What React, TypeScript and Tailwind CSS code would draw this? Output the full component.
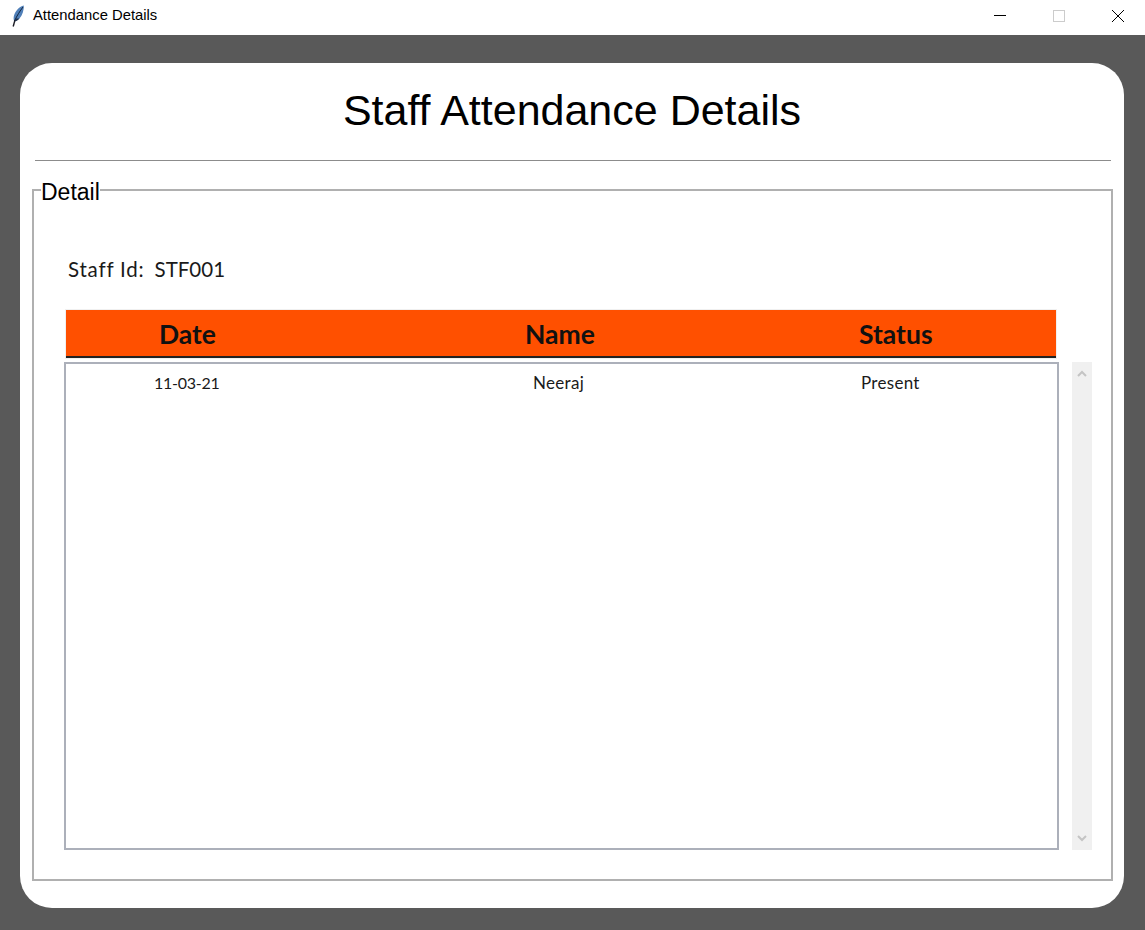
import type { ReactElement } from "react";

const ROWS = [{ date: "11-03-21", name: "Neeraj", status: "Present" }];

function Feather(): ReactElement {
  return (
    <svg width="14" height="22" viewBox="0 0 14 22" className="block">
      <path d="M12.800 0.500C8.500 1.500 4.500 5.500 3 10.500 2.400 12.500 2.500 14.500 3.200 16.500L8.500 13.500C11.500 10 13 5 12.800 0.500Z" fill="#4f7fb8" />
      <path d="M12 2C9 6 6 10.500 3.500 16" stroke="#12253f" strokeWidth="1" fill="none" />
      <path d="M4 15L2.200 21.500" stroke="#1c1c24" strokeWidth="1.400" fill="none" />
      <path d="M3.200 16.500C5 16.500 7 15.500 8.500 13.500L5 13.500Z" fill="#1d2f4a" />
    </svg>
  );
}

function TitleBar(): ReactElement {
  return (
    <div className="flex h-[35px] items-center bg-white pb-[4px] pl-[11px] text-black">
      <Feather />
      <span className="ml-[8px] font-['Liberation_Sans',sans-serif] text-[14.800px] leading-none">Attendance Details</span>
      <div className="ml-auto flex items-center">
        <svg width="12" height="12" viewBox="0 0 12 12" className="mr-[47px]">
          <path d="M0 5.500H12" stroke="#000" strokeWidth="1" />
        </svg>
        <svg width="12" height="12" viewBox="0 0 12 12" className="mr-[47px]">
          <rect x="0.500" y="0.500" width="11" height="11" fill="none" stroke="#cccccc" strokeWidth="1" />
        </svg>
        <svg width="12" height="12" viewBox="0 0 12 12" className="mr-[21px]">
          <path d="M0 0L12 12M12 0L0 12" stroke="#000" strokeWidth="1" />
        </svg>
      </div>
    </div>
  );
}

export default function App(): ReactElement {
  return (
    <div className="h-[930px] w-[1145px] overflow-hidden bg-[#595959]">
      <TitleBar />
      <div className="pl-[20px] pt-[28px]">
        <div className="h-[845px] w-[1104px] rounded-[32px] bg-white pt-[21px]">
          <h1 className="text-center font-['Liberation_Sans',sans-serif] text-[43px] leading-[52px] text-black">
            Staff Attendance Details
          </h1>
          <div className="ml-[15px] mt-[24px] h-px w-[1076px] bg-[#8c8c8c]" />
          <fieldset className="ml-[12px] mt-[15px] h-[705px] w-[1081px] min-w-0 border-2 border-[#b0b0b0] pl-[30px] pr-[18px] pt-[52px]">
            <legend className="-ml-[23px] pl-0 pt-[4px] font-['Liberation_Sans',sans-serif] text-[23px] leading-[24px] text-black">Detail</legend>
            <div className="flex pl-[4px] font-['Lato',sans-serif] text-[20.500px] leading-[26px] text-[#1a1a1a]">
              <span className="tracking-[0.800px]">Staff Id:</span>
              <span className="ml-[10px]">STF001</span>
            </div>
            <div className="mt-[27px] flex items-start">
              <div className="w-[995px]">
                <div className="ml-px w-[992px] border border-[#f0f0f0]">
                  <div className="grid h-[48px] grid-cols-[245px_435px_1fr] items-center border-b-2 border-[#222222] bg-[#ff5000] pt-[3px] font-['Lato',sans-serif] text-[26.500px] font-bold text-[#111111]">
                    <span className="pl-[93px]">Date</span>
                    <span className="pl-[214px]">Name</span>
                    <span className="pl-[113px]">Status</span>
                  </div>
                </div>
                <div className="mt-[3px] h-[488px] border-2 border-[#acb0ba] pt-[9px] font-['Lato',sans-serif] text-[17px] leading-[20px] text-[#1a1a1a]">
                  {ROWS.map((row) => (
                    <div key={row.date} className="grid grid-cols-[245px_435px_1fr]">
                      <span className="pl-[88px] text-[16px] tracking-[-0.250px]">{row.date}</span>
                      <span className="pl-[222px] tracking-[0.300px]">{row.name}</span>
                      <span className="pl-[115px] tracking-[0.300px]">{row.status}</span>
                    </div>
                  ))}
                </div>
              </div>
              <div className="ml-[13px] mt-[53px] flex h-[488px] w-[20px] flex-col items-center justify-between bg-[#f0f0f0] py-[8px]">
                <svg width="10" height="8" viewBox="0 0 10 8">
                  <path d="M1 6L5 2L9 6" fill="none" stroke="#c4c4c4" strokeWidth="2" />
                </svg>
                <svg width="10" height="8" viewBox="0 0 10 8">
                  <path d="M1 2L5 6L9 2" fill="none" stroke="#c4c4c4" strokeWidth="2" />
                </svg>
              </div>
            </div>
          </fieldset>
        </div>
      </div>
    </div>
  );
}
